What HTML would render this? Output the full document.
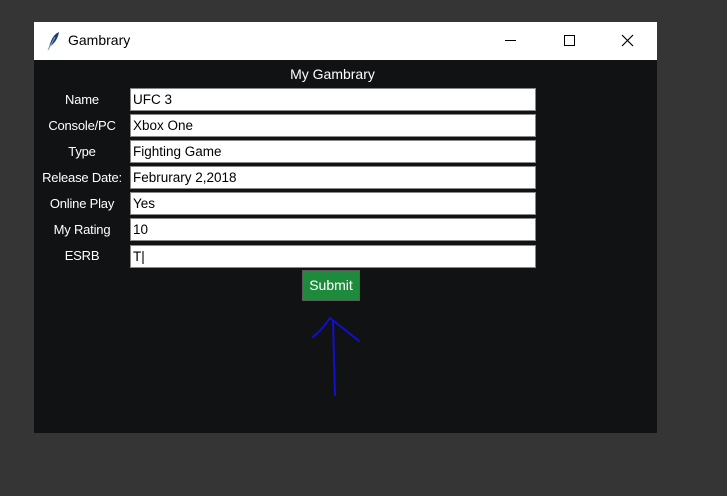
<!DOCTYPE html>
<html><head><style>
body{margin:0;width:727px;height:496px;background:#353535;position:relative;overflow:hidden;font-family:"Liberation Sans","DejaVu Sans",sans-serif;}
.win{position:absolute;left:34px;top:22px;width:623px;height:411px;background:#111214;}
.tb{position:absolute;left:0;top:0;width:623px;height:38px;background:#fff;font-size:14px;color:#000;}
.lab{position:absolute;color:#fff;font-size:13px;text-align:center;width:96px;left:0;letter-spacing:-0.2px}
.ent{position:absolute;left:96px;width:406px;height:23px;background:#fff;border:1px solid #888;font-size:13.5px;line-height:21px;padding-left:2px;box-sizing:border-box;color:#000;}
</style></head><body>
<div class="win">
<div class="tb">
<svg style="position:absolute;left:12px;top:9px" width="14" height="20" viewBox="0 0 14 20"><path d="M2 19 L5 10 Q8 3 13 1 Q12 8 7 13 Q5 15 4 15 Z" fill="#1f3d6e"/><path d="M2 19 L9 6" stroke="#7aa0d0" stroke-width="1"/></svg>
<span style="position:absolute;left:34px;top:10px">Gambrary</span>
<div style="position:absolute;left:471px;top:18px;width:11px;height:1px;background:#000"></div>
<div style="position:absolute;left:530px;top:13px;width:9px;height:9px;border:1px solid #000"></div>
<svg style="position:absolute;left:587px;top:12px" width="13" height="13"><path d="M1 1L12 12M12 1L1 12" stroke="#000" stroke-width="1.2"/></svg>
</div>
<div style="position:absolute;left:0;width:597px;top:44px;text-align:center;color:#fff;font-size:14px">My Gambrary</div>
<div class="lab" style="top:70px">Name</div><div class="ent" style="top:66px">UFC 3</div>
<div class="lab" style="top:96px">Console/PC</div><div class="ent" style="top:92px">Xbox One</div>
<div class="lab" style="top:122px">Type</div><div class="ent" style="top:118px">Fighting Game</div>
<div class="lab" style="top:148px">Release Date:</div><div class="ent" style="top:144px">Februrary 2,2018</div>
<div class="lab" style="top:174px">Online Play</div><div class="ent" style="top:170px">Yes</div>
<div class="lab" style="top:200px">My Rating</div><div class="ent" style="top:196px">10</div>
<div class="lab" style="top:226px">ESRB</div><div class="ent" style="top:223px">T|</div>
<div style="position:absolute;left:268px;top:248px;width:58px;height:31px;background:#1e8a3c;border:1px solid #5a5a5a;box-sizing:border-box;color:#fff;font-size:14px;text-align:center;line-height:29px">Submit</div>
</div>
<svg style="position:absolute;left:0;top:0" width="727" height="496"><path d="M333 322 L335 395 M313 337 Q322 330 330 318 L359 341" stroke="#1010d0" stroke-width="2" fill="none" stroke-linecap="round"/></svg>
</body></html>
